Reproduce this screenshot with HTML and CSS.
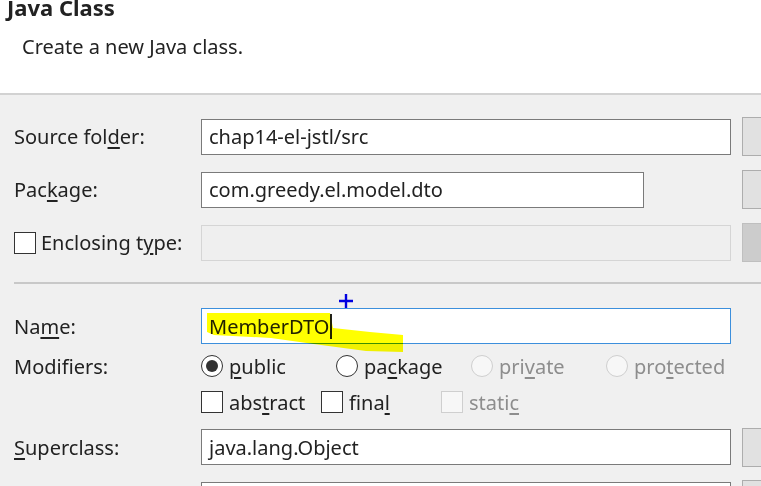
FILE: index.html
```html
<!DOCTYPE html>
<html lang="en">
<head>
    <meta charset="UTF-8">
    <meta name="viewport" content="width=device-width, initial-scale=1.0">
    <title>New Java Class</title>
    <link rel="stylesheet" href="styles.css">
</head>
<body>
    <div class="header">
        <h1 class="titulo">Java Class</h1>
        <p class="descricao">Create a new Java class.</p>
    </div>

    <div class="form">
        <div class="row row-btn">
            <span class="label">Source fol<u>d</u>er:</span>
            <div class="field">chap14-el-jstl/src</div>
            <span class="botao"></span>
        </div>
        <div class="row row-btn">
            <span class="label">Pac<u>k</u>age:</span>
            <div class="field field-curto">com.greedy.el.model.dto</div>
            <span class="botao"></span>
        </div>
        <div class="row row-btn">
            <span class="label"><span class="check"></span>Enclosing t<u>y</u>pe:</span>
            <div class="field disabled"></div>
            <span class="botao botao-off"></span>
        </div>

        <div class="separador"></div>

        <div class="row row-name">
            <span class="label">Na<u>m</u>e:</span>
            <div class="field focus">MemberDTO<span class="caret"></span>
                <svg class="marca" width="202" height="44" viewBox="0 0 202 44">
                    <path d="M5 3 L128 3 L131 18 L168 22 L201 25 L201 42 L164 41 L119 35 L69 28 L12 25 L5 22 Z" fill="#ffff00"/>
                </svg>
            </div>
            <svg class="cursor" width="14" height="14" viewBox="0 0 14 14">
                <path d="M7 0 V14 M0 7 H14" stroke="#0000e0" stroke-width="2.4"/>
            </svg>
        </div>
        <div class="row row-opt">
            <span class="label">Modifiers:</span>
            <div class="opcoes">
                <span class="opt w-public"><span class="radio on"></span><u>p</u>ublic</span>
                <span class="opt w-package"><span class="radio"></span>pa<u>c</u>kage</span>
                <span class="opt w-private off"><span class="radio"></span>pri<u>v</u>ate</span>
                <span class="opt off"><span class="radio"></span>pro<u>t</u>ected</span>
            </div>
        </div>
        <div class="row row-opt row-opt2">
            <span class="label"></span>
            <div class="opcoes">
                <span class="opt w-abstract"><span class="check"></span>abs<u>t</u>ract</span>
                <span class="opt w-final"><span class="check"></span>fina<u>l</u></span>
                <span class="opt off"><span class="check"></span>stati<u>c</u></span>
            </div>
        </div>
        <div class="row row-btn row-super">
            <span class="label"><u>S</u>uperclass:</span>
            <div class="field">java.lang.Object</div>
            <span class="botao"></span>
        </div>
        <div class="row row-btn">
            <span class="label">Interfaces:</span>
            <div class="field"></div>
            <span class="botao"></span>
        </div>
    </div>
</body>
</html>
```

FILE: styles.css
```css
body {
    font-family: "Noto Sans", Arial, sans-serif;
    font-size: 20px;
    color: #222;
    background-color: #f0f0f0;
    margin: 0;
    width: 761px;
    height: 486px;
    overflow: hidden;
}

u {
    text-underline-offset: 3px;
}

.header {
    background: white;
    height: 93px;
    border-bottom: 2px solid #d2d2d2;
    overflow: hidden;
}

.titulo {
    font-size: 22px;
    font-weight: bold;
    margin: -6px 0 0 7px;
    line-height: 27px;
}

.descricao {
    margin: 13px 0 0 22px;
    line-height: 26px;
}

.form {
    padding: 22px 0 0 14px;
}

.row {
    display: flex;
    align-items: center;
    white-space: nowrap;
    position: relative;
}

.row-btn {
    height: 39px;
    margin-bottom: 14px;
}

.label {
    width: 187px;
    flex-shrink: 0;
    display: flex;
    align-items: center;
}

.field {
    width: 514px;
    height: 34px;
    flex-shrink: 0;
    padding: 0 7px;
    box-sizing: content-box;
    border: 1px solid #7a7a7a;
    background: white;
    display: flex;
    align-items: center;
    position: relative;
}

.field-curto {
    width: 427px;
    margin-right: 87px;
}

.field.disabled {
    background: #efefef;
    border-color: #d5d5d5;
}

.field.focus {
    border-color: #3c8fdc;
}

.botao {
    flex-shrink: 0;
    width: 60px;
    height: 37px;
    margin-left: 11px;
    background: #e1e1e1;
    border: 1px solid #adadad;
}

.botao-off {
    background: #cccccc;
    border-color: #bfbfbf;
}

.check {
    width: 20px;
    height: 20px;
    border: 1px solid #333;
    background: white;
    flex-shrink: 0;
    margin-right: 6px;
}

.label .check {
    margin-right: 5px;
}

.separador {
    height: 2px;
    background: #c8c8c8;
    margin: 20px 0 0 0;
}

.row-name {
    height: 36px;
    margin-top: 24px;
}

.caret {
    width: 2px;
    height: 25px;
    background: #222;
    margin-left: 1px;
}

.marca {
    position: absolute;
    left: 0;
    top: 1px;
    mix-blend-mode: multiply;
}

.cursor {
    position: absolute;
    left: 325px;
    top: -14px;
}

.row-opt {
    height: 24px;
    margin-top: 10px;
}

.row-opt2 {
    margin-top: 12px;
}

.opcoes {
    display: flex;
    align-items: center;
}

.opt {
    display: flex;
    align-items: center;
}

.opt.off {
    color: #8d8d8d;
}

.w-public { width: 135px; }
.w-package { width: 135px; }
.w-private { width: 135px; }
.w-abstract { width: 120px; }
.w-final { width: 120px; }

.radio {
    width: 20px;
    height: 20px;
    border: 1px solid #333;
    border-radius: 50%;
    background: white;
    margin-right: 6px;
    position: relative;
    flex-shrink: 0;
}

.radio.on::after {
    content: "";
    position: absolute;
    left: 4px;
    top: 4px;
    width: 12px;
    height: 12px;
    border-radius: 50%;
    background: #333;
}

.off .radio,
.off .check {
    border-color: #cfcfcf;
    background: #f7f7f7;
}

.row-super {
    margin-top: 14px;
    height: 38px;
}
```
